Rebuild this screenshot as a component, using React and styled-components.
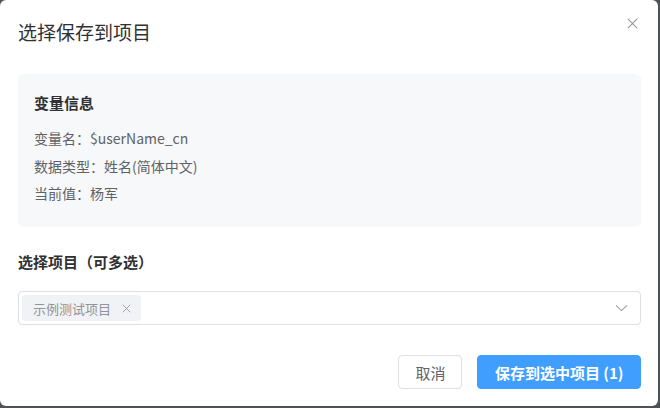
import React from "react"
import styled, { createGlobalStyle } from "styled-components"

const GlobalStyle = createGlobalStyle`
  html, body {
    margin: 0;
    padding: 0;
    background: #4f5254;
    font-family: "Noto Sans CJK SC", "Noto Sans", sans-serif;
  }
  * {
    box-sizing: border-box;
  }
`

const Dialog = styled.div`
  position: relative;
  width: 658px;
  height: 406px;
  background: #ffffff;
  border-radius: 6px;
  padding: 20px 17px 0 18px;
  display: flex;
  flex-direction: column;
`

const Title = styled.h2`
  margin: 0;
  font-size: 19px;
  line-height: 24px;
  font-weight: 400;
  color: #303133;
`

const CloseButton = styled.button`
  position: absolute;
  top: 16px;
  right: 18px;
  width: 15px;
  height: 15px;
  padding: 0;
  border: none;
  background: transparent;
  display: flex;
  align-items: center;
  justify-content: center;
  cursor: pointer;
`

const InfoCard = styled.div`
  margin-top: 30px;
  background: #f7f8fa;
  border-radius: 6px;
  padding: 18px 16px 24px;
  display: flex;
  flex-direction: column;
`

const CardTitle = styled.div`
  font-size: 15px;
  line-height: 22px;
  font-weight: 700;
  color: #303133;
  margin-bottom: 14px;
`

const InfoLine = styled.div`
  font-size: 14px;
  line-height: 20px;
  color: #606266;
  & + & {
    margin-top: 7.5px;
  }
`

const SectionLabel = styled.div`
  margin-top: 24px;
  font-size: 15px;
  line-height: 22px;
  font-weight: 700;
  color: #303133;
`

const Select = styled.div`
  margin-top: 18px;
  height: 34px;
  border: 1px solid #dcdfe6;
  border-radius: 4px;
  padding: 0 12px 0 3px;
  display: flex;
  align-items: center;
  justify-content: space-between;
`

const Tag = styled.span`
  height: 26px;
  padding: 0 10px 0 11px;
  border-radius: 4px;
  background: #f0f2f5;
  color: #909399;
  font-size: 13px;
  display: inline-flex;
  align-items: center;
  gap: 11px;
`

const Footer = styled.div`
  margin-top: 30px;
  display: flex;
  justify-content: flex-end;
  gap: 15px;
`

const Button = styled.button`
  height: 34px;
  padding: 0 ${(p) => (p.$primary ? "16.5px" : "16px")};
  border-radius: 4px;
  border: 1px solid ${(p) => (p.$primary ? "#409eff" : "#dcdfe6")};
  background: ${(p) => (p.$primary ? "#409eff" : "#ffffff")};
  color: ${(p) => (p.$primary ? "#ffffff" : "#606266")};
  font-family: "Noto Sans CJK SC", "Noto Sans", sans-serif;
  font-size: 15px;
  font-weight: ${(p) => (p.$primary ? 700 : 400)};
  cursor: pointer;
`

const CrossIcon = ({ size, color }) => (
  <svg width={size} height={size} viewBox="0 0 12 12" fill="none">
    <path d="M1 1L11 11M11 1L1 11" stroke={color} strokeWidth="1.1" />
  </svg>
)

const ChevronIcon = () => (
  <svg width="13" height="8" viewBox="0 0 13 8" fill="none">
    <path d="M1 1.5L6.5 6.5L12 1.5" stroke="#a8abb2" strokeWidth="1.1" />
  </svg>
)

export default function App() {
  return (
    <>
      <GlobalStyle />
      <Dialog>
        <Title>选择保存到项目</Title>
        <CloseButton aria-label="关闭">
          <CrossIcon size={11} color="#909399" />
        </CloseButton>

        <InfoCard>
          <CardTitle>变量信息</CardTitle>
          <InfoLine>变量名：$userName_cn</InfoLine>
          <InfoLine>数据类型：姓名(简体中文)</InfoLine>
          <InfoLine>当前值：杨军</InfoLine>
        </InfoCard>

        <SectionLabel>选择项目（可多选）</SectionLabel>
        <Select>
          <Tag>
            示例测试项目
            <CrossIcon size={9} color="#909399" />
          </Tag>
          <ChevronIcon />
        </Select>

        <Footer>
          <Button>取消</Button>
          <Button $primary>保存到选中项目 (1)</Button>
        </Footer>
      </Dialog>
    </>
  )
}
